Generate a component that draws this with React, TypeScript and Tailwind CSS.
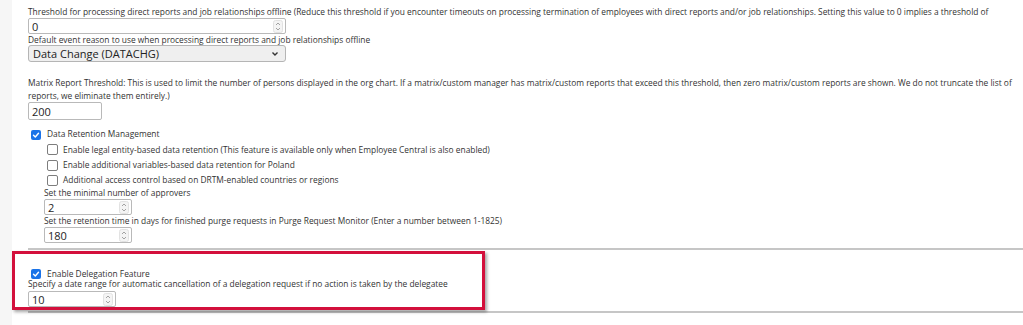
import React from "react";

const font = { fontFamily: '"Open Sans", "Noto Sans", sans-serif' };

function Spinner() {
  return (
    <svg width="10" height="13" viewBox="0 0 10 13" className="shrink-0">
      <rect x="0.5" y="0.5" width="9" height="12" rx="2" fill="#f4f4f4" stroke="#e2e2e2" />
      <path d="M3 5 L5 3 L7 5" fill="none" stroke="#9a9a9a" strokeWidth="0.9" />
      <path d="M3 8 L5 10 L7 8" fill="none" stroke="#9a9a9a" strokeWidth="0.9" />
    </svg>
  );
}

function NumInput({ value, w, spin = true }: { value: string; w: string; spin?: boolean }) {
  return (
    <div className={`${w} border border-[#b9b9b9] rounded-[2px] bg-white flex items-center justify-between pl-[3px] pr-[2px]`}>
      <span className="text-[11px] leading-none text-[#1e1e1e]">{value}</span>
      {spin && <Spinner />}
    </div>
  );
}

function Check({ checked }: { checked: boolean }) {
  if (checked)
    return (
      <span className="w-[10px] h-[10px] rounded-[2px] bg-[#1a73e8] flex items-center justify-center shrink-0">
        <svg width="8" height="8" viewBox="0 0 8 8">
          <path d="M1.5 4.2 L3.3 6 L6.5 2.2" fill="none" stroke="white" strokeWidth="1.4" strokeLinecap="round" strokeLinejoin="round" />
        </svg>
      </span>
    );
  return <span className="w-[11px] h-[11px] rounded-[2px] bg-white border border-[#7d7d7d] shrink-0" />;
}

export default function App() {
  return (
    <div className="w-[1023px] h-[325px] bg-white flex overflow-hidden relative text-[#333] text-[8.4px]" style={font}>
      <div className="w-[12px] bg-[#f6f6f6] shrink-0" />
      <div className="flex-1 pl-[16px] pt-[6px] flex flex-col whitespace-nowrap">
        <div className="leading-[12px]">
          Threshold for processing direct reports and job relationships offline (Reduce this threshold if you encounter timeouts on processing termination of employees with direct reports and/or job relationships. Setting this value to 0 implies a threshold of
        </div>
        <div>
          <NumInput value="0" w="w-[258px] h-[16px]" />
        </div>
        <div className="leading-[11px] mt-[0px]">Default event reason to use when processing direct reports and job relationships offline</div>
        <div className="w-[258px] h-[17px] border border-[#b5b5b5] rounded-[3px] bg-[#efefef] flex items-center justify-between pl-[4px] pr-[6px]">
          <span className="text-[11px] leading-none text-[#222]">Data Change (DATACHG)</span>
          <svg width="8" height="6" viewBox="0 0 8 6">
            <path d="M1.5 1.5 L4 4 L6.5 1.5" fill="none" stroke="#333" strokeWidth="1.4" />
          </svg>
        </div>
        <div className="leading-[13px] mt-[14px]">
          Matrix Report Threshold: This is used to limit the number of persons displayed in the org chart. If a matrix/custom manager has matrix/custom reports that exceed this threshold, then zero matrix/custom reports are shown. We do not truncate the list of
          <br />
          reports, we eliminate them entirely.)
        </div>
        <div>
          <NumInput value="200" w="w-[74px] h-[18px]" spin={false} />
        </div>
        <div className="flex items-center gap-[6px] ml-[3px] mt-[7px] h-[15.33px]">
          <Check checked />
          <span>Data Retention Management</span>
        </div>
        <div className="ml-[19px] flex flex-col">
          <div className="flex items-center gap-[5px] h-[15.33px]">
            <Check checked={false} />
            <span>Enable legal entity-based data retention (This feature is available only when Employee Central is also enabled)</span>
          </div>
          <div className="flex items-center gap-[5px] h-[15.33px]">
            <Check checked={false} />
            <span>Enable additional variables-based data retention for Poland</span>
          </div>
          <div className="flex items-center gap-[5px] h-[15.33px]">
            <Check checked={false} />
            <span>Additional access control based on DRTM-enabled countries or regions</span>
          </div>
        </div>
        <div className="ml-[16px] flex flex-col">
          <div className="leading-[10px]">Set the minimal number of approvers</div>
          <div className="mt-[1px]">
            <NumInput value="2" w="w-[88px] h-[16px]" />
          </div>
          <div className="leading-[11px]">Set the retention time in days for finished purge requests in Purge Request Monitor (Enter a number between 1-1825)</div>
          <div className="mt-[1px]">
            <NumInput value="180" w="w-[88px] h-[16px]" />
          </div>
        </div>
        <div className="mt-[5px] h-[2px] bg-[#c6c6c6]" />
        <div className="flex items-center gap-[6px] ml-[3px] mt-[18px] h-[11px]">
          <Check checked />
          <span>Enable Delegation Feature</span>
        </div>
        <div className="leading-[10px]">Specify a date range for automatic cancellation of a delegation request if no action is taken by the delegatee</div>
        <div className="mt-[2px]">
          <NumInput value="10" w="w-[88px] h-[16px]" />
        </div>
        <div className="mt-[4px] h-[2px] bg-[#c6c6c6]" />
      </div>
      <div className="absolute left-[12px] top-[251px] w-[473px] h-[59px] border-[3px] border-[#d3103c] shadow-[2px_2px_3px_rgba(0,0,0,0.35)]" />
    </div>
  );
}
